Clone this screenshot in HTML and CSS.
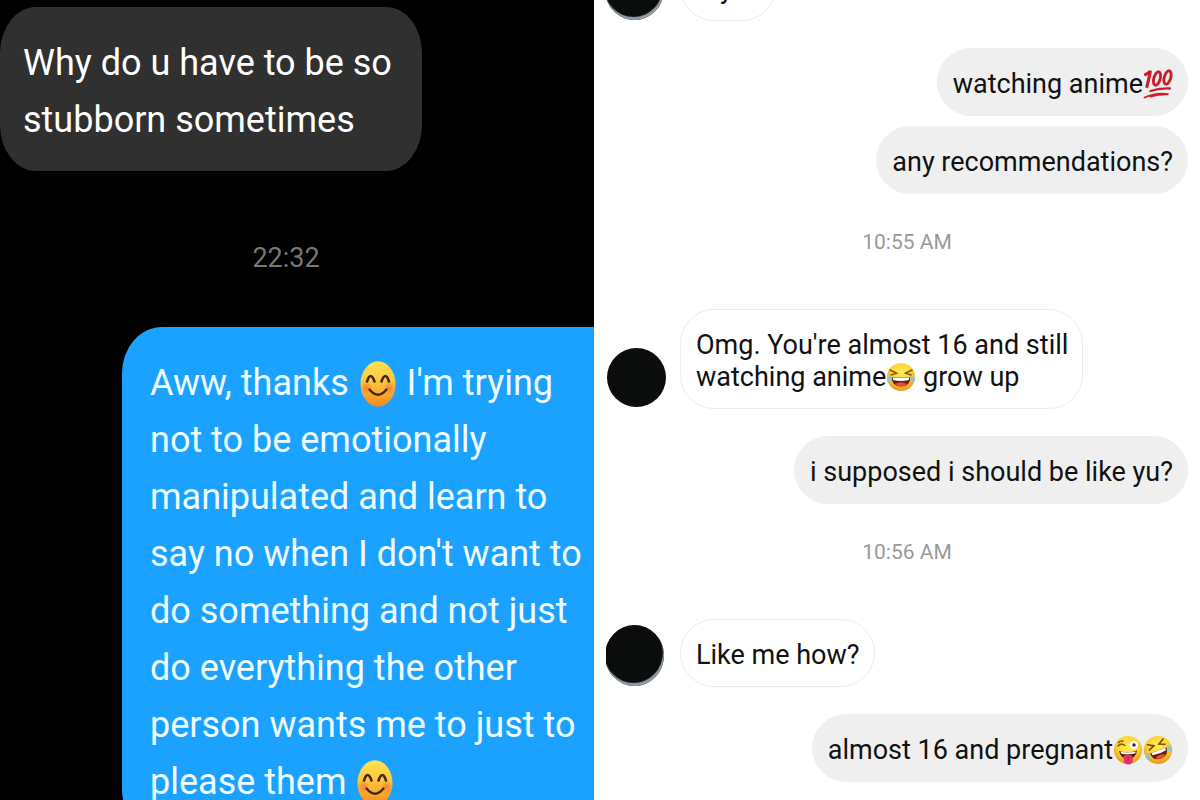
FILE: index.html
```html
<!DOCTYPE html>
<html lang="en">
<head>
<meta charset="utf-8">
<meta name="viewport" content="width=device-width, initial-scale=1">
<title>Conversations</title>
<link rel="stylesheet" href="styles.css">
</head>
<body>
<svg class="defs" aria-hidden="true">
  <defs>
    <linearGradient id="blushFill" x1="0" y1="0" x2="0" y2="1">
      <stop offset="0" stop-color="#fde34f"/><stop offset=".45" stop-color="#fcc63f"/><stop offset="1" stop-color="#f58a1c"/>
    </linearGradient>
    <radialGradient id="cheek"><stop offset="0" stop-color="#f4623a" stop-opacity=".65"/><stop offset="1" stop-color="#f4623a" stop-opacity="0"/></radialGradient>
    <radialGradient id="faceFill" cx=".5" cy=".35" r=".65">
      <stop offset="0" stop-color="#ffee58"/><stop offset=".6" stop-color="#fbd130"/><stop offset="1" stop-color="#e8951c"/>
    </radialGradient>
    <symbol id="blush" viewBox="0 0 36 46">
      <ellipse cx="18" cy="23" rx="17.5" ry="22.8" fill="url(#blushFill)"/>
      <ellipse cx="6.5" cy="27" rx="6" ry="7" fill="url(#cheek)"/>
      <ellipse cx="29.5" cy="27" rx="6" ry="7" fill="url(#cheek)"/>
      <g fill="none" stroke="#422b0d" stroke-linecap="round">
        <path d="M7 20.500Q10.500 9.500 14.500 20.500M21.500 20.500Q25.500 9.500 29 20.500" stroke-width="2.600"/>
        <path d="M9.500 28.500Q18 39 26.500 28.500" stroke-width="2.300"/>
      </g>
    </symbol>
    <symbol id="joy" viewBox="0 0 30 30">
      <circle cx="15" cy="15" r="14" fill="url(#faceFill)"/>
      <path d="M4 8l6.500 3.200L5 13M26 8l-6.500 3.200L25 13" fill="none" stroke="#8a5410" stroke-width="1.500" stroke-linecap="round"/>
      <path d="M5.500 15.500h19Q24 24.500 15 24.500T5.500 15.500z" fill="#6b1d14"/>
      <path d="M7 15.700h16v2.300q-8 2-16 0z" fill="#fff"/>
      <path d="M9 22q6-3.500 12 0-2.500 2.500-6 2.500T9 22z" fill="#ed4a3b"/>
      <path d="M1 16q3-2.500 5-2-.5 6-3.500 6.500Q.5 20 1 16zM29 16q-3-2.500-5-2 .5 6 3.500 6.500Q29.500 20 29 16z" fill="#8cc9c6"/>
    </symbol>
    <symbol id="wink" viewBox="0 0 30 30">
      <circle cx="15" cy="15" r="14" fill="url(#faceFill)"/>
      <path d="M5 11q3-3.500 7-.5M5.500 7.500q2.500-2 4.500-1.200" fill="none" stroke="#8a5410" stroke-width="1.500" stroke-linecap="round"/>
      <circle cx="21" cy="10" r="4.300" fill="#fff"/><circle cx="21" cy="10" r="1.700" fill="#3b2411"/>
      <path d="M6 16q9 3 18-.5-1 8-9 8.500-7.500-.5-9-8z" fill="#541b12"/>
      <path d="M7.500 16.600q7.500 2 15-.2v1.800q-7.500 2-14.500.2z" fill="#fff"/>
      <path d="M10.500 21q4.500-2.500 9 0l.3 5q-.8 3.500-4.500 3.500T10.800 26z" fill="#e8326c"/>
      <path d="M15.200 22v4" stroke="#b51a4e" stroke-width="1"/>
    </symbol>
    <symbol id="rofl" viewBox="0 0 30 30">
      <circle cx="15" cy="15" r="14" fill="url(#faceFill)"/>
      <g transform="rotate(-20 15 15)">
        <path d="M7 6.500l5.500 3.200L7 12M23.500 6.500L18 9.700l5.500 2.300" fill="none" stroke="#7a480e" stroke-width="1.600" stroke-linecap="round"/>
        <path d="M6.500 15.500h17.500Q23.500 24 15 24t-8.500-8.500z" fill="#6b1d14"/>
        <path d="M8 15.700h14.500v2.400q-7 1.500-14.500 0z" fill="#fff"/>
        <path d="M10 21.700q5-3 10.500 0-2 2.300-5.500 2.300t-5-2.300z" fill="#ed4a3b"/>
        <path d="M1 17q2.500-3 5-2.500 0 5-2.500 6.500Q1 21 1 17zM29 17q-2.500-3-5-2.500 0 5 2.500 6.500 2.500 0 2.500-4z" fill="#8cc9c6"/>
      </g>
    </symbol>
    <symbol id="hundred" viewBox="0 0 30 30">
      <g fill="none" stroke="#cf1c2b" stroke-linecap="round">
        <path d="M2.500 5.500Q5.500 4.500 7.500 2L4 17.500" stroke-width="3.200"/>
        <ellipse cx="14" cy="9.500" rx="3.200" ry="7" transform="rotate(16 14 9.500)" stroke-width="2.900"/>
        <ellipse cx="24.500" cy="8.500" rx="3.200" ry="7" transform="rotate(16 24.500 8.500)" stroke-width="2.900"/>
        <path d="M7.500 22Q16 19 27 19.500" stroke-width="2.300"/>
        <path d="M1.500 28.500Q13 23.500 25.500 25.200Q15 25 7.500 27.500" stroke-width="1.900"/>
      </g>
    </symbol>
  </defs>
</svg>
<main class="board">
  <section class="chat chat-dark" aria-label="Dark conversation">
    <p class="bubble bubble-in">Why do u have to be so<br>stubborn sometimes</p>
    <time class="stamp">22:32</time>
    <p class="bubble bubble-out">Aww, thanks <svg class="emoji" role="img" aria-label="smiling face"><use href="#blush"/></svg> I'm trying<br>not to be emotionally<br>manipulated and learn to<br>say no when I don't want to<br>do something and not just<br>do everything the other<br>person wants me to just to<br>please them <svg class="emoji" role="img" aria-label="smiling face"><use href="#blush"/></svg></p>
  </section>
  <section class="chat chat-light" aria-label="Light conversation">
    <div class="row row-first"><span class="avatar avatar-photo"></span><p class="bubble bubble-in">Wyd?</p></div>
    <p class="bubble bubble-out">watching anime<svg class="emoji" role="img" aria-label="hundred points"><use href="#hundred"/></svg></p>
    <p class="bubble bubble-out follow">any recommendations?</p>
    <time class="stamp">10:55 AM</time>
    <div class="row"><span class="avatar"></span><p class="bubble bubble-in">Omg. You're almost 16 and still<br>watching anime<svg class="emoji" role="img" aria-label="laughing with tears"><use href="#joy"/></svg> grow up</p></div>
    <p class="bubble bubble-out">i supposed i should be like yu?</p>
    <time class="stamp">10:56 AM</time>
    <div class="row"><span class="avatar avatar-photo"></span><p class="bubble bubble-in">Like me how?</p></div>
    <p class="bubble bubble-out">almost 16 and pregnant<svg class="emoji" role="img" aria-label="winking with tongue"><use href="#wink"/></svg><svg class="emoji" role="img" aria-label="rolling with laughter"><use href="#rofl"/></svg></p>
  </section>
</main>
</body>
</html>
```
FILE: styles.css
```css
* { box-sizing: border-box; }
body { margin: 0; background: #fff; font-family: Roboto, "Liberation Sans", sans-serif; }
p { margin: 0; }
.defs { position: absolute; width: 0; height: 0; }
.board { display: grid; grid-template-columns: 1fr 1fr; gap: 12px; height: 100vh; overflow: hidden; }
.chat { display: flex; flex-direction: column; min-width: 0; overflow: hidden; }
.bubble { flex: none; white-space: nowrap; }

.chat-dark { background: #000; padding-top: 7px; font-size: 36px; line-height: 57px; }
.chat-dark .bubble { border-radius: 36px / 46px; color: #fff; }
.chat-dark .bubble-in { align-self: flex-start; padding: 28px 30px 22px 23px; background: #303030; }
.chat-dark .stamp { margin: 71px 22px 53px 0; font-size: 27px; line-height: 32px; text-align: center; color: #777; }
.chat-dark .bubble-out { margin-left: 122px; padding: 28px 0 24px 28px; border-radius: 40px 0 0 40px / 46px 0 0 46px; background: #1ba1ff; color: #effdff; }
.chat-dark .emoji { width: 36px; height: 46px; margin: 0 2px; vertical-align: -12px; }

.chat-light { padding-right: 12px; font-size: 27px; line-height: 32px; color: #111; }
.chat-light .bubble { padding: 19px 14px 15px 15px; border-radius: 34px; border: 1px solid #ececec; }
.chat-light .bubble-out { align-self: flex-end; margin-top: 27px; background: #efefef; border-color: #efefef; }
.chat-light .bubble-out.follow { margin-top: 10px; }
.chat-light .stamp { margin: 32px 0 51px 20px; font-size: 21px; line-height: 32px; text-align: center; color: #999; }
.chat-light .emoji { width: 30px; height: 30px; vertical-align: 2px; margin: -8px 0; }
.row { display: flex; align-items: flex-end; gap: 14px; flex: none; }
.row-first { margin-top: -47px; }
.avatar { flex: none; width: 59px; height: 59px; margin: 0 0 2px 1px; border-radius: 50%; background: #0b0c0c; }
.avatar-photo { height: 61px; margin-bottom: 1px; margin-left: -1px; margin-right: 2px; box-shadow: inset -1px -3px 1px #91a0a8; }
```
